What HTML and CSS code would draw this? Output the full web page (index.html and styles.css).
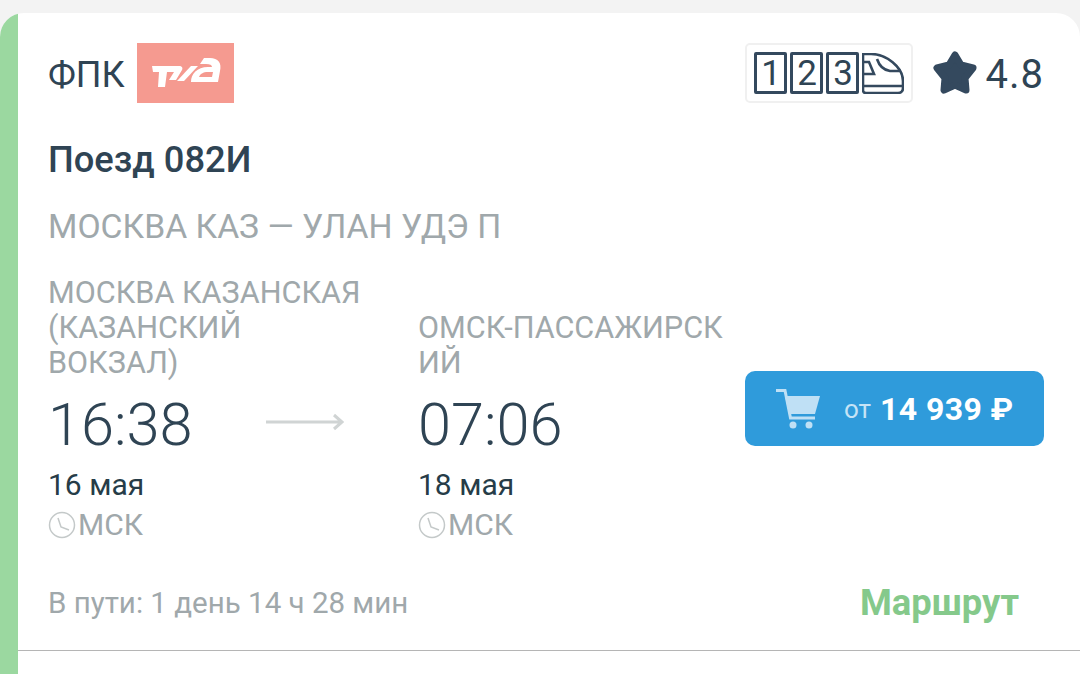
FILE: index.html
```html
<!DOCTYPE html>
<html lang="en">

<head>
    <meta charset="UTF-8">
    <meta name="viewport" content="width=device-width, initial-scale=1.0">
    <title>Поезд 082И</title>
    <link rel="stylesheet" href="styles.css">
</head>

<body>
    <div class="card">
        <div class="strip"></div>
        <div class="content">
            <div class="top">
                <div class="carrier">
                    <span class="carrier-name">ФПК</span>
                    <div class="logo">
                        <svg width="97" height="60" viewBox="0 0 97 60" fill="#fff">
                            <path d="M15 23H42C45 23 46 25 45 27L39 37H32L37 29H30L28 44H21L22 29H16Z" />
                            <path d="M40 38L54 23H61L47 38Z" />
                            <path fill-rule="evenodd" d="M54 39C54 31 60 24 71 24H75C75 22 73 21 69 21H63L67 15H73C81 15 85 20 83 28L81 39ZM62 34H75L76 29H71C66 29 63 31 62 34Z" />
                        </svg>
                    </div>
                </div>
                <div class="right">
                    <div class="classes">
                        <span class="cls">1</span>
                        <span class="cls">2</span>
                        <span class="cls">3</span>
                        <svg class="train" width="42" height="41" viewBox="0 0 42 41" fill="none" stroke="#34495e" stroke-width="2.6">
                            <path d="M1 1h8C24 1 41 14 41 28v7c0 3-2 5-5 5H4c-2 0-3-1-3-3z" />
                            <path d="M1 9h6l5 12H1M15 6c2 6 6 11 13 12h11M1 33h40" />
                        </svg>
                    </div>
                    <svg class="star" width="46" height="46" viewBox="0 0 46 46">
                        <path fill="#34495e" stroke="#34495e" stroke-width="7" stroke-linejoin="round" d="M23 5l6 10 12 3-8 10 1 12-11-5-11 5 1-12-8-10 12-3z" />
                    </svg>
                    <span class="rating">4.8</span>
                </div>
            </div>
            <h1 class="train-name">Поезд 082И</h1>
            <div class="route">МОСКВА КАЗ — УЛАН УДЭ П</div>
            <div class="trip">
                <div class="point">
                    <div class="station">МОСКВА КАЗАНСКАЯ (КАЗАНСКИЙ ВОКЗАЛ)</div>
                    <div class="time-row">
                        <div class="time">16:38</div>
                        <svg class="arrow" width="78" height="20" viewBox="0 0 78 20" fill="none" stroke="#d0d4d4" stroke-width="3">
                            <path d="M0 10h76M68 3l8 7-8 7" />
                        </svg>
                    </div>
                    <div class="date">16 мая</div>
                    <div class="zone">
                        <svg width="28" height="28" viewBox="0 0 28 28" fill="none" stroke="#c4c9c9" stroke-width="1.5">
                            <circle cx="14" cy="14" r="12.5" />
                            <path d="M10 7l3 9 8 3" />
                        </svg>
                        <span>МСК</span>
                    </div>
                </div>
                <div class="point point-arrival">
                    <div class="station">ОМСК-ПАССАЖИРСКИЙ</div>
                    <div class="time-row">
                        <div class="time">07:06</div>
                    </div>
                    <div class="date">18 мая</div>
                    <div class="zone">
                        <svg width="28" height="28" viewBox="0 0 28 28" fill="none" stroke="#c4c9c9" stroke-width="1.5">
                            <circle cx="14" cy="14" r="12.5" />
                            <path d="M10 7l3 9 8 3" />
                        </svg>
                        <span>МСК</span>
                    </div>
                </div>
                <div class="buy">
                    <button class="buy-btn">
                        <svg width="46" height="42" viewBox="0 0 46 42">
                            <path fill="none" stroke="#bfe0f5" stroke-width="3" d="M0 2.5h9L14.5 30H39" />
                            <path fill="#bfe0f5" d="M9 8h35l-5 18H13z" />
                            <circle cx="17" cy="37" r="3.5" fill="#bfe0f5" />
                            <circle cx="33" cy="37" r="3.5" fill="#bfe0f5" />
                        </svg>
                        <span class="from">от</span>
                        <span class="price">14 939 ₽</span>
                    </button>
                </div>
            </div>
            <div class="bottom">
                <span class="duration">В пути: 1 день 14 ч 28 мин</span>
                <span class="map-link">Маршрут</span>
            </div>
        </div>
    </div>
</body>

</html>
```

FILE: styles.css
```css
body {
    margin: 0;
    padding-top: 13px;
    height: 661px;
    overflow: hidden;
    background-color: #f3f3f3;
    font-family: Roboto, sans-serif;
    color: #2f4454;
}

.card {
    display: flex;
    height: 661px;
    background-color: #fff;
    border-radius: 24px 24px 0 0;
    overflow: hidden;
}

.strip {
    width: 18px;
    background-color: #9bd8a0;
}

.content {
    flex: 1;
    display: flex;
    flex-direction: column;
}

.top {
    display: flex;
    justify-content: space-between;
    align-items: center;
    padding: 30px 36px 0 30px;
}

.carrier {
    display: flex;
    align-items: center;
    gap: 12px;
    font-size: 36px;
    font-weight: 400;
}

.carrier-name {
    padding-top: 3px;
}

.logo {
    display: flex;
    width: 97px;
    height: 60px;
    background-color: #f59a90;
}

.right {
    display: flex;
    align-items: center;
}

.classes {
    display: flex;
    align-items: center;
    gap: 3px;
    box-sizing: border-box;
    width: 168px;
    height: 60px;
    padding: 0 7px;
    border: 2px solid #f0f0f0;
    border-radius: 5px;
    margin-right: 19px;
}

.cls {
    display: flex;
    align-items: center;
    justify-content: center;
    box-sizing: border-box;
    width: 33px;
    height: 42px;
    border: 3px solid #34495e;
    border-radius: 2px;
    font-size: 35px;
    font-weight: 400;
}

.star {
    margin-right: 7px;
}

.rating {
    padding-top: 3px;
    font-size: 40px;
    font-weight: 400;
    letter-spacing: 1px;
}

.train-name {
    margin: 37px 0 0 30px;
    font-size: 36.3px;
    line-height: 40px;
    font-weight: 500;
}

.route {
    margin: 27px 0 0 30px;
    font-size: 33.7px;
    line-height: 40px;
    color: #a0a8ab;
}

.trip {
    display: flex;
    align-items: flex-end;
    margin: 28px 0 0 30px;
}

.point {
    width: 370px;
}

.point-arrival {
    width: 327px;
}

.station {
    width: 320px;
    font-size: 30.6px;
    line-height: 35px;
    color: #a0a8ab;
}

.point-arrival .station {
    word-break: break-all;
}

.time-row {
    display: flex;
    align-items: center;
    gap: 73px;
    margin-top: 11px;
}

.arrow {
    margin-bottom: 6px;
}

.time {
    font-size: 59.5px;
    line-height: 68px;
    font-weight: 300;
}

.date {
    margin-top: 8px;
    font-size: 30px;
    line-height: 36px;
    color: #263c48;
}

.zone {
    display: flex;
    align-items: center;
    gap: 2px;
    margin-top: 4px;
    font-size: 30px;
    line-height: 36px;
    color: #a0a8ab;
}

.buy {
    align-self: stretch;
    padding-top: 96px;
}

.buy-btn {
    display: flex;
    align-items: center;
    width: 299px;
    height: 75px;
    padding: 0 0 0 31px;
    border: none;
    border-radius: 10px;
    background-color: #2f9bdb;
    font-family: Roboto, sans-serif;
    color: #fff;
}

.from {
    margin-left: 22px;
    font-size: 26px;
    color: #c5e3f6;
}

.price {
    margin-left: 9px;
    font-size: 32px;
    font-weight: 700;
    letter-spacing: 0.4px;
}

.bottom {
    display: flex;
    justify-content: space-between;
    align-items: center;
    height: 95px;
    margin-top: 12px;
    padding: 0 61px 0 31px;
    border-bottom: 1px solid #b5b5b5;
}

.duration {
    margin-left: -1px;
    font-size: 29.5px;
    color: #a0a8ab;
}

.map-link {
    font-size: 36.4px;
    font-weight: 700;
    color: #85c98b;
}
```
